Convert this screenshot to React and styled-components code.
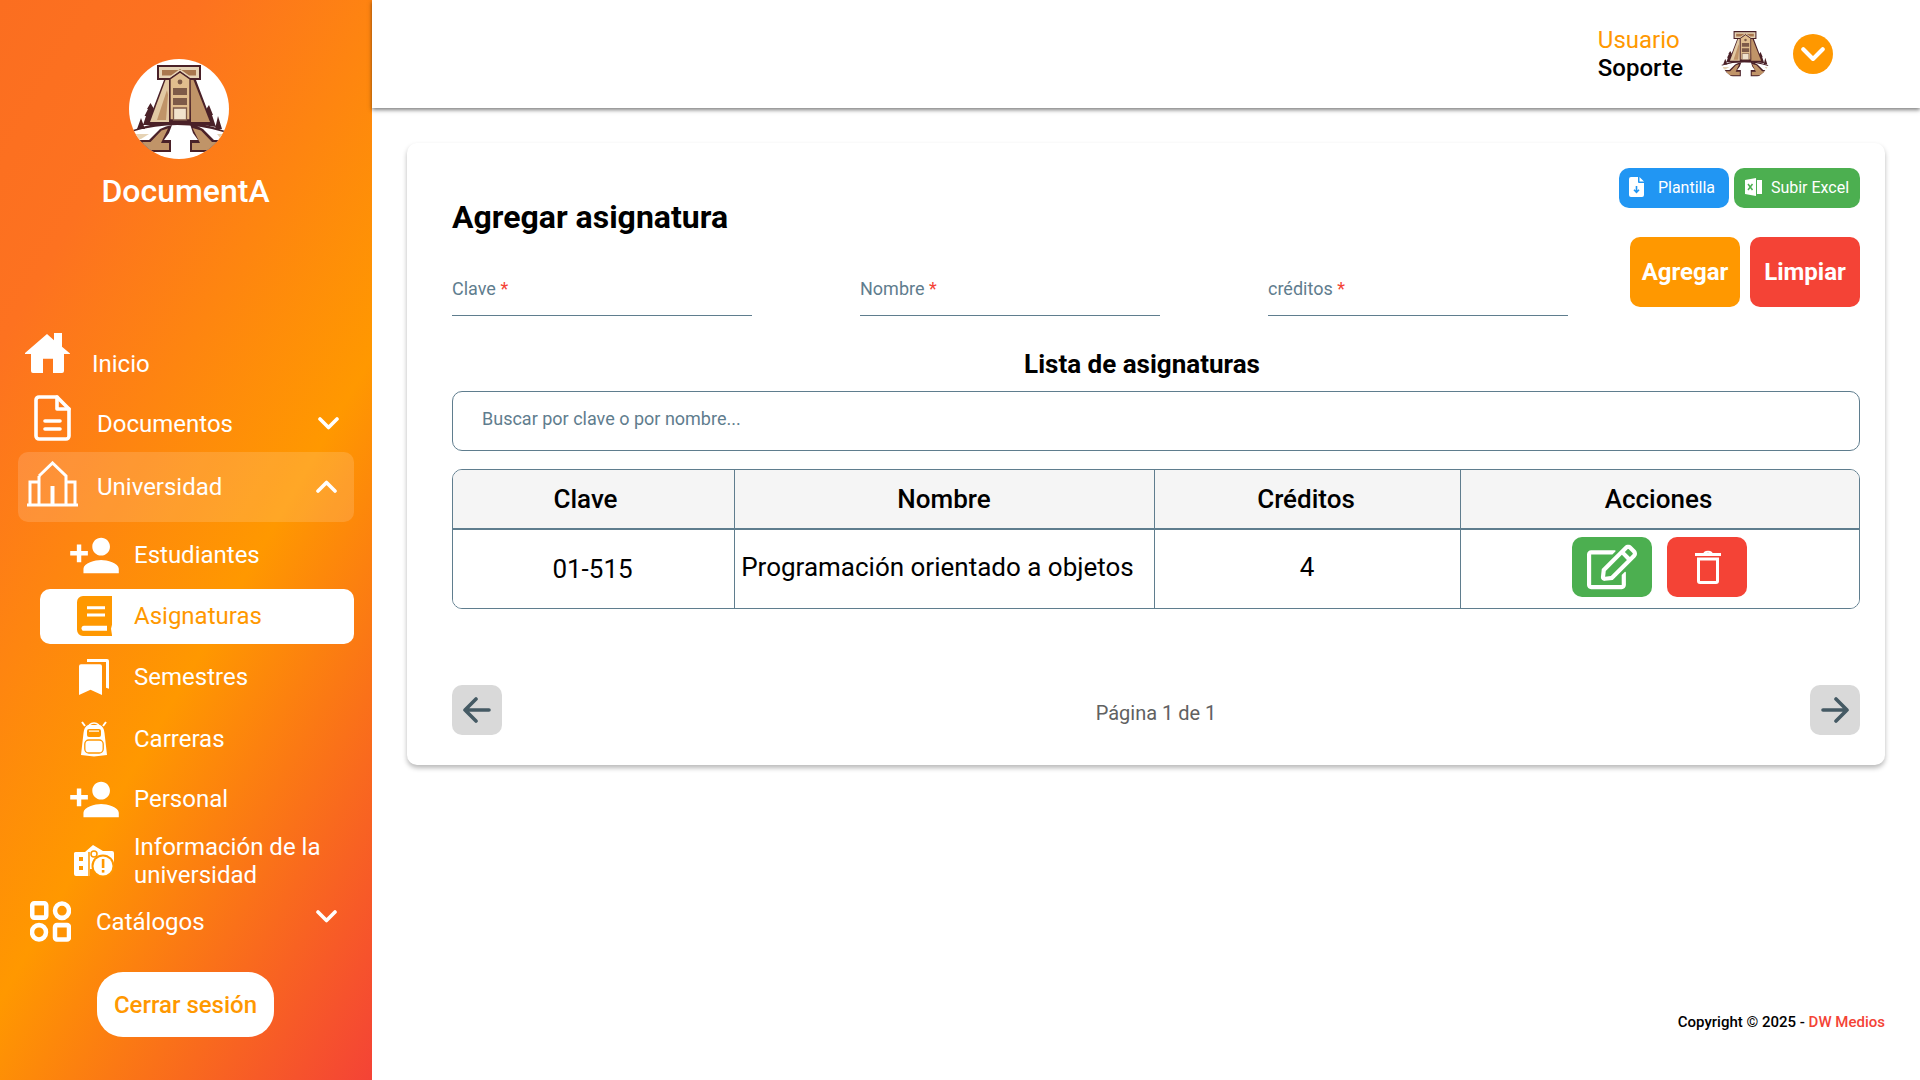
import React from "react";
import styled, { createGlobalStyle } from "styled-components";
import { MdPersonAdd } from "react-icons/md";
import { FaRegEdit } from "react-icons/fa";

const ORANGE = "#ff9800";
const RED = "#f44336";
const SLATE = "#5f7d8e";

const GlobalStyle = createGlobalStyle`
  html, body {
    margin: 0;
    height: 100%;
    overflow: hidden;
    background: #ffffff;
    font-family: Roboto, "Liberation Sans", sans-serif;
  }
  * { box-sizing: border-box; }
`;

function Logo({ size, circle }) {
  const clip = circle ? "logoClipA" : "logoClipB";
  return (
    <svg width={size} height={size} viewBox="0 0 100 100">
      <defs>
        <clipPath id={clip}>
          <circle cx="50" cy="50" r="50" />
        </clipPath>
      </defs>
      {circle && <circle cx="50" cy="50" r="50" fill="#fff" />}
      <g clipPath={`url(#${clip})`}>
        <path d="M14 66 L17 57 L15.500 57 L19 50 L18 50 L21.500 44 L25 50 L24 50 L28 66 Z M74 66 L77 52 L76 52 L80 46 L84 56 L83 56 L87 68 Z M8 70 L12 59 L16 70 Z M86 70 L89 57 L93 70 Z" fill="#4a2128" />
        <path d="M28 6 H72 V21 H67 L84 66 H18 L35 21 H28 Z" fill="#4a2128" />
        <path d="M30 8 H70 V19 H61 L51 12 L41 19 H30 Z" fill="#e6d3b5" />
        <path d="M33 11 H67 V16.500 H60 L51 10 L42 16.500 H33 Z" fill="#a9774e" />
        <path d="M36.500 21 L21 63 H40 L40 21 Z" fill="#e2c9a3" />
        <path d="M38 31 L28 61 H37 L39 36 Z" fill="#c09468" />
        <path d="M64.500 21 L81 63 H62 L61 21 Z" fill="#c09468" />
        <path d="M41 20 L51 13 L61 20 V61 H41 Z" fill="#e0bd8e" stroke="#4a2128" strokeWidth="1.300" />
        <path d="M44 29 H58 V36 H44 Z M44 39 H58 V46 H44 Z" fill="#7d5a48" />
        <path d="M44.500 49 H57.500 V61 H44.500 Z" fill="#f0e2cc" stroke="#7d5a48" strokeWidth="1.300" />
        <circle cx="51" cy="23" r="2.400" fill="#7d5a48" />
        <path d="M4 71 Q50 54 96 72 L96 73.500 Q50 59 4 72.500 Z" fill="#4a2128" />
        <path d="M7 75 H20 L12 80 H7 Z M96 75 H88 L92 80 H96 Z" fill="#e6d3b5" />
        <path d="M9 81 H20 L31 70 Q37 67 43 66 L40 74 L35 81 H42 V93 H18 Q12 88 9 81 Z" fill="#4a2128" />
        <path d="M13 83 H21.500 L32.500 71.500 L39 69.500 L32 84 H40 V91 H20 Q16 88 13 83 Z" fill="#c09468" />
        <path d="M94 81 H85 L74 70 Q68 66 61 65 L64 74 L69 81 H61 V93 H84 Q90 88 94 81 Z" fill="#4a2128" />
        <path d="M90 83 H83 L72 71.500 L63.500 69 L71 84 H63 V91 H82 Q86 88 90 83 Z" fill="#c09468" />
      </g>
    </svg>
  );
}

const HomeIcon = () => (
  <svg width="45" height="40" viewBox="0 0 45 39" preserveAspectRatio="none" fill="#fff">
    <path d="M0 19.500 L22 1 L29 7 V0 H37 V13.500 L45 20 V20.500 H39 V37 a2 2 0 0 1 -2 2 H28 V25 H18 V39 H8 a2 2 0 0 1 -2 -2 V20.500 H0 Z" />
  </svg>
);

const DocIcon = () => (
  <svg width="37" height="46" viewBox="0 0 37 46" fill="none" stroke="#fff" strokeWidth="3.600" strokeLinejoin="round" strokeLinecap="round">
    <path d="M5 2 H23 L35 14 V41 a3 3 0 0 1 -3 3 H5 a3 3 0 0 1 -3 -3 V5 a3 3 0 0 1 3 -3 Z" />
    <path d="M23 2 V14 H35" />
    <path d="M11 26 H26 M11 34 H26" />
  </svg>
);

const CampusIcon = () => (
  <svg width="51" height="46" viewBox="0 0 51 46" fill="none" stroke="#fff" strokeWidth="3">
    <path d="M0 44 H51" />
    <path d="M12 15 L25.500 2 L39 15 V44" />
    <path d="M12 15 V44" />
    <path d="M3 44 V21 H12 M39 21 H48 V44" />
    <path d="M25.500 25 V44" strokeWidth="4" />
  </svg>
);

const BookIcon = () => (
  <svg width="35" height="40" viewBox="0 0 35 39" preserveAspectRatio="none" fill={ORANGE}>
    <path d="M6 0 H35 V28 L34 32 L35 38 V39 H6 a6 6 0 0 1 -6 -6 V6 a6 6 0 0 1 6 -6 Z" />
    <path d="M10 10 H28 V13 H10 Z M10 17 H28 V20 H10 Z" fill="#fff" />
    <path d="M7 29 H30 V34 H7 a2.500 2.500 0 0 1 0 -5 Z" fill="#fff" />
  </svg>
);

const BookmarksIcon = () => (
  <svg width="30" height="36" viewBox="0 0 30 35" preserveAspectRatio="none" fill="#fff">
    <path d="M0 7 a2 2 0 0 1 2 -2 H21 a2 2 0 0 1 2 2 V35 L11.500 30 L0 35 Z" />
    <path d="M8 0 H28 a2 2 0 0 1 2 2 V29 L27 28 V3 H8 Z" />
  </svg>
);

const BackpackIcon = () => (
  <svg width="26" height="36" viewBox="0 0 26 36">
    <path d="M1 1 L4 5 M25 1 L22 5" stroke="#fff" strokeWidth="2" />
    <path d="M8 4 Q13 0 18 4" stroke="#fff" strokeWidth="1.500" fill="none" />
    <path d="M7 4 H19 Q23 6 23.500 12 L26 34 L13 35.500 L0 34 L2.500 12 Q3 6 7 4 Z" fill="#fff" />
    <rect x="6" y="8" width="14" height="8" rx="2" fill={ORANGE} />
    <rect x="8" y="9.500" width="10" height="1.200" fill="#fff" />
    <rect x="3.800" y="19" width="18.400" height="13" rx="4" fill="none" stroke={ORANGE} strokeWidth="1.300" />
  </svg>
);

const InfoIcon = () => (
  <svg width="40" height="32" viewBox="0 0 40 32" fill="#fff">
    <path d="M0 8 a2 2 0 0 1 2 -1 H11 L19 0 L29 6 H38 a2 2 0 0 1 2 2 V24 H0 Z M0 24 H16 V31 H2 a2 2 0 0 1 -2 -2 Z" />
    <path d="M15 7 V32" stroke={ORANGE} strokeWidth="1.500" />
    <rect x="5" y="12" width="4" height="4" fill={ORANGE} />
    <rect x="5" y="21" width="4" height="4" fill={ORANGE} />
    <circle cx="20" cy="9" r="3" fill="none" stroke={ORANGE} strokeWidth="1.500" />
    <circle cx="29" cy="21" r="11.500" fill={ORANGE} />
    <circle cx="29" cy="21" r="9.500" fill="#fff" />
    <rect x="27.800" y="14" width="2.600" height="9" fill={ORANGE} />
    <rect x="27.800" y="25" width="2.600" height="2.600" fill={ORANGE} />
  </svg>
);

const CatalogIcon = () => (
  <svg width="41" height="41" viewBox="0 0 41 40" preserveAspectRatio="none" fill="none" stroke="#fff" strokeWidth="4.500">
    <rect x="2.250" y="2.250" width="14" height="14" rx="2" />
    <circle cx="32" cy="9.500" r="7" />
    <circle cx="9" cy="30.500" r="7" />
    <rect x="25" y="23.500" width="14" height="14" rx="2" />
  </svg>
);

const Chevron = ({ up, size = 21, color = "#fff" }) => (
  <svg width={size} height={size * 0.62} viewBox="0 0 21 13" fill="none" stroke={color} strokeWidth="3.600" strokeLinecap="round" strokeLinejoin="round">
    <path d={up ? "M2 11 L10.500 2.500 L19 11" : "M2 2 L10.500 10.500 L19 2"} />
  </svg>
);

const FileDownIcon = () => (
  <svg width="15" height="20" viewBox="0 0 15 20">
    <path d="M2 0 H9 V5 a1 1 0 0 0 1 1 H15 V18 a2 2 0 0 1 -2 2 H2 a2 2 0 0 1 -2 -2 V2 a2 2 0 0 1 2 -2 Z M10.500 0 L15 4.500 H10.500 Z" fill="#fff" />
    <path d="M7.500 9 V15 M5 12.800 L7.500 15.300 L10 12.800" stroke="#2196f3" strokeWidth="1.600" fill="none" />
  </svg>
);

const ExcelIcon = () => (
  <svg width="17" height="18" viewBox="0 0 17 18">
    <path d="M0 2 L11 0 V18 L0 16 Z" fill="#fff" />
    <path d="M12 2 H17 V16 H12 Z" fill="#fff" />
    <path d="M3 6 L7.500 12 M7.500 6 L3 12" stroke="#4caf50" strokeWidth="1.500" />
  </svg>
);

const TrashIcon = () => (
  <svg width="26" height="34" viewBox="0 0 26 34" fill="none" stroke="#fff" strokeWidth="3">
    <path d="M0 4.500 H26" />
    <path d="M9 3 Q13 0.500 17 3" strokeWidth="2" />
    <path d="M3.500 9 H22.500 V31 a1.500 1.500 0 0 1 -1.500 1.500 H5 a1.500 1.500 0 0 1 -1.500 -1.500 Z" />
  </svg>
);

const ArrowIcon = ({ left }) => (
  <svg width="28" height="28" viewBox="0 0 28 28" fill="none" stroke="#455a64" strokeWidth="3.600" strokeLinecap="round" strokeLinejoin="round">
    <path d={left ? "M26 14 H2 M13 3 L2 14 L13 25" : "M2 14 H26 M15 3 L26 14 L15 25"} />
  </svg>
);

const Sidebar = styled.aside`
  width: 372px;
  height: 1080px;
  flex-shrink: 0;
  padding-top: 59px;
  color: #fff;
  background: linear-gradient(120deg, #fb6e20 0%, #fd7220 20%, #ff9800 58%, #f44336 100%);
`;

const Brand = styled.div`
  display: flex;
  flex-direction: column;
  align-items: center;
  height: 274px;
  padding-right: 1px;
`;

const LogoWrap = styled.div`
  display: flex;
  margin-right: 13px;
  line-height: 0;
`;

const BrandName = styled.div`
  margin-top: 12px;
  font-size: 32px;
  line-height: 40px;
  font-weight: 500;
`;

const Nav = styled.nav`
  display: flex;
  flex-direction: column;
`;

const MainItem = styled.div`
  display: flex;
  align-items: ${(p) => p.$align || "flex-end"};
  height: ${(p) => p.$height}px;
  margin: ${(p) => p.$margin || "0"};
  padding: 0 ${(p) => p.$right || 33}px 0 ${(p) => p.$left}px;
  border-radius: 10px;
  background: ${(p) => (p.$open ? "rgba(255, 255, 255, 0.15)" : "transparent")};
`;

const MainSlot = styled.span`
  display: flex;
  flex-shrink: 0;
  align-self: flex-start;
  margin-top: ${(p) => p.$top || 0}px;
  width: ${(p) => p.$width}px;
`;

const Label = styled.span`
  font-size: 24px;
  line-height: 28px;
`;

const ChevronSlot = styled.span`
  display: flex;
  margin-left: auto;
  align-self: ${(p) => (p.$top ? "flex-start" : "center")};
  margin-top: ${(p) => p.$top || 0}px;
`;

const SubItem = styled.div`
  display: flex;
  align-items: center;
  gap: 16px;
  height: ${(p) => p.$height}px;
  margin: ${(p) => p.$top}px 18px 0 40px;
  padding-left: 30px;
  padding-bottom: ${(p) => (p.$active ? 1 : 0)}px;
  border-radius: 10px;
  background: ${(p) => (p.$active ? "#fff" : "transparent")};
  color: ${(p) => (p.$active ? ORANGE : "#fff")};
`;

const SubSlot = styled.span`
  display: flex;
  justify-content: center;
  width: 48px;
  flex-shrink: 0;
`;

const PersonIcon = styled(MdPersonAdd)`
  flex-shrink: 0;
  font-size: 53px;
`;

const LogoutRow = styled.div`
  display: flex;
  justify-content: center;
  margin-top: 30px;
  padding-right: 1px;
`;

const LogoutButton = styled.button`
  width: 177px;
  height: 65px;
  border: none;
  border-radius: 26px;
  background: #fff;
  color: ${ORANGE};
  font-family: inherit;
  font-size: 24px;
  font-weight: 500;
`;

const Page = styled.div`
  display: flex;
  width: 1920px;
  height: 1080px;
`;

const Main = styled.main`
  flex: 1;
  display: flex;
  flex-direction: column;
  min-width: 0;
`;

const Header = styled.header`
  display: flex;
  align-items: center;
  justify-content: flex-end;
  height: 108px;
  padding-right: 87px;
  box-shadow: 0 2px 4px rgba(0, 0, 0, 0.5);
`;

const UserText = styled.div`
  display: flex;
  flex-direction: column;
  margin-right: 36px;
  font-size: 24px;
  line-height: 28px;
`;

const UserRole = styled.span`
  color: ${ORANGE};
`;

const UserName = styled.span`
  color: #000;
  font-weight: 500;
`;

const UserToggle = styled.div`
  display: flex;
  align-items: center;
  justify-content: center;
  width: 40px;
  height: 40px;
  margin-left: 22px;
  border-radius: 50%;
  background: ${ORANGE};
`;

const Card = styled.section`
  margin: 35px 35px 0;
  height: 622px;
  padding: 25px 25px 0 45px;
  border-radius: 10px;
  background: #fff;
  box-shadow: 0 3px 5px rgba(0, 0, 0, 0.28);
`;

const TopGrid = styled.div`
  display: flex;
  justify-content: space-between;
`;

const FormSide = styled.div`
  width: 1116px;
  padding-top: 30px;
`;

const Title = styled.h1`
  margin: 0;
  font-size: 32px;
  line-height: 38px;
  font-weight: 700;
  color: #000;
`;

const Fields = styled.div`
  display: flex;
  gap: 108px;
  margin-top: 43px;
`;

const Field = styled.label`
  display: block;
  width: 300px;
  height: 37px;
  border-bottom: 1px solid ${SLATE};
  font-size: 18px;
  line-height: 20px;
  color: ${SLATE};
`;

const Star = styled.span`
  color: ${RED};
`;

const ActionSide = styled.div`
  display: flex;
  flex-direction: column;
  align-items: flex-end;
`;

const SmallButtons = styled.div`
  display: flex;
  gap: 5px;
`;

const SmallButton = styled.button`
  display: flex;
  align-items: center;
  justify-content: center;
  gap: ${(p) => p.$gap}px;
  width: ${(p) => p.$width}px;
  height: 40px;
  padding: 0 ${(p) => p.$right || 0}px 2px 0;
  border: none;
  border-radius: 10px;
  background: ${(p) => p.$bg};
  color: #fff;
  font-family: inherit;
  font-size: 16px;
`;

const BigButtons = styled.div`
  display: flex;
  gap: 10px;
  margin-top: 29px;
`;

const BigButton = styled.button`
  width: 110px;
  height: 70px;
  border: none;
  border-radius: 10px;
  background: ${(p) => p.$bg};
  color: #fff;
  font-family: inherit;
  font-size: 24px;
  font-weight: 700;
`;

const ListTitle = styled.h2`
  margin: 31px 0 0;
  padding-right: 28px;
  text-align: center;
  font-size: 26px;
  line-height: 34px;
  font-weight: 700;
  color: #000;
`;

const Search = styled.div`
  display: flex;
  align-items: center;
  height: 60px;
  margin-top: 10px;
  padding: 0 29px 6px;
  border: 1px solid ${SLATE};
  border-radius: 10px;
  font-size: 18px;
  color: ${SLATE};
`;

const TableBox = styled.div`
  margin-top: 18px;
  height: 140px;
  border: 1px solid ${SLATE};
  border-radius: 10px;
  overflow: hidden;
`;

const GridRow = styled.div`
  display: grid;
  grid-template-columns: 282px 420px 306px 1fr;
  height: ${(p) => p.$height}px;
  background: ${(p) => p.$bg || "#fff"};
  border-bottom: ${(p) => p.$line || "none"};
`;

const HeadCell = styled.div`
  display: flex;
  align-items: center;
  justify-content: center;
  padding-right: ${(p) => p.$pad || 0}px;
  border-right: ${(p) => (p.$last ? "none" : `1px solid ${SLATE}`)};
  font-size: 26px;
  font-weight: 500;
  color: #000;
`;

const BodyCell = styled.div`
  display: flex;
  align-items: center;
  justify-content: center;
  gap: 15px;
  padding-right: ${(p) => p.$shift || 0}px;
  padding-bottom: ${(p) => p.$drop || 0}px;
  border-right: ${(p) => (p.$last ? "none" : `1px solid ${SLATE}`)};
  font-size: 26px;
  color: #000;
  white-space: nowrap;
`;

const RowButton = styled.button`
  display: flex;
  align-items: center;
  justify-content: center;
  width: 80px;
  height: 60px;
  padding: 0 0 0 ${(p) => p.$nudge || 0}px;
  border: none;
  border-radius: 10px;
  background: ${(p) => p.$bg};
  color: #fff;
`;

const Pager = styled.div`
  display: flex;
  align-items: center;
  justify-content: space-between;
  margin-top: 76px;
`;

const PageButton = styled.button`
  display: flex;
  align-items: center;
  justify-content: center;
  width: 50px;
  height: 50px;
  padding: 0;
  border: none;
  border-radius: 10px;
  background: #d9d9d9;
`;

const PageText = styled.span`
  padding-top: 6px;
  font-size: 20px;
  color: #616161;
`;

const Footer = styled.footer`
  margin-top: auto;
  padding: 0 35px 48px 0;
  text-align: right;
  font-size: 15px;
  line-height: 20px;
  font-weight: 500;
  color: #000;
`;

const FooterBrand = styled.span`
  color: ${RED};
`;

function App() {
  return (
    <Page>
      <GlobalStyle />
      <Sidebar>
        <Brand>
          <LogoWrap>
            <Logo size={100} circle />
          </LogoWrap>
          <BrandName>DocumentA</BrandName>
        </Brand>
        <Nav>
          <MainItem $height={45} $left={25} $margin="0 0 17px">
            <MainSlot $width={67}><HomeIcon /></MainSlot>
            <Label>Inicio</Label>
          </MainItem>
          <MainItem $height={43} $left={34} $margin="0 0 14px">
            <MainSlot $width={63}><DocIcon /></MainSlot>
            <Label>Documentos</Label>
            <ChevronSlot $top={22}><Chevron /></ChevronSlot>
          </MainItem>
          <MainItem $open $align="center" $height={70} $left={9} $right={17} $margin="0 18px">
            <MainSlot $top={9} $width={70}><CampusIcon /></MainSlot>
            <Label>Universidad</Label>
            <ChevronSlot><Chevron up /></ChevronSlot>
          </MainItem>
          <SubItem $height={50} $top={8}>
            <SubSlot><PersonIcon /></SubSlot>
            <Label>Estudiantes</Label>
          </SubItem>
          <SubItem $active $height={55} $top={9}>
            <SubSlot><BookIcon /></SubSlot>
            <Label>Asignaturas</Label>
          </SubItem>
          <SubItem $height={50} $top={8}>
            <SubSlot><BookmarksIcon /></SubSlot>
            <Label>Semestres</Label>
          </SubItem>
          <SubItem $height={50} $top={12}>
            <SubSlot><BackpackIcon /></SubSlot>
            <Label>Carreras</Label>
          </SubItem>
          <SubItem $height={50} $top={10}>
            <SubSlot><PersonIcon /></SubSlot>
            <Label>Personal</Label>
          </SubItem>
          <SubItem $height={56} $top={9}>
            <SubSlot><InfoIcon /></SubSlot>
            <Label>Información de la<br />universidad</Label>
          </SubItem>
          <MainItem $align="center" $height={41} $left={30} $right={35} $margin="12px 0 0">
            <MainSlot $width={66}><CatalogIcon /></MainSlot>
            <Label>Catálogos</Label>
            <ChevronSlot $top={9}><Chevron /></ChevronSlot>
          </MainItem>
        </Nav>
        <LogoutRow>
          <LogoutButton>Cerrar sesión</LogoutButton>
        </LogoutRow>
      </Sidebar>
      <Main>
        <Header>
          <UserText>
            <UserRole>Usuario</UserRole>
            <UserName>Soporte</UserName>
          </UserText>
          <Logo size={52} />
          <UserToggle><Chevron size={24} /></UserToggle>
        </Header>
        <Card>
          <TopGrid>
            <FormSide>
              <Title>Agregar asignatura</Title>
              <Fields>
                <Field>Clave <Star>*</Star></Field>
                <Field>Nombre <Star>*</Star></Field>
                <Field>créditos <Star>*</Star></Field>
              </Fields>
            </FormSide>
            <ActionSide>
              <SmallButtons>
                <SmallButton $bg="#2196f3" $width={110} $gap={14} $right={4}><FileDownIcon />Plantilla</SmallButton>
                <SmallButton $bg="#4caf50" $width={126} $gap={9}><ExcelIcon />Subir Excel</SmallButton>
              </SmallButtons>
              <BigButtons>
                <BigButton $bg={ORANGE}>Agregar</BigButton>
                <BigButton $bg={RED}>Limpiar</BigButton>
              </BigButtons>
            </ActionSide>
          </TopGrid>
          <ListTitle>Lista de asignaturas</ListTitle>
          <Search>Buscar por clave o por nombre...</Search>
          <TableBox>
            <GridRow $height={60} $bg="#f5f5f5" $line={`2px solid ${SLATE}`}>
              <HeadCell $pad={16}>Clave</HeadCell>
              <HeadCell $pad={1}>Nombre</HeadCell>
              <HeadCell $pad={3}>Créditos</HeadCell>
              <HeadCell $last $pad={3}>Acciones</HeadCell>
            </GridRow>
            <GridRow $height={78}>
              <BodyCell $shift={2}>01-515</BodyCell>
              <BodyCell $shift={14} $drop={4}>Programación orientado a objetos</BodyCell>
              <BodyCell $shift={1} $drop={4}>4</BodyCell>
              <BodyCell $last $shift={2} $drop={4}>
                <RowButton $bg="#4caf50"><FaRegEdit size={50} /></RowButton>
                <RowButton $bg={RED} $nudge={3}><TrashIcon /></RowButton>
              </BodyCell>
            </GridRow>
          </TableBox>
          <Pager>
            <PageButton><ArrowIcon left /></PageButton>
            <PageText>Página 1 de 1</PageText>
            <PageButton><ArrowIcon /></PageButton>
          </Pager>
        </Card>
        <Footer>
          Copyright © 2025 - <FooterBrand>DW Medios</FooterBrand>
        </Footer>
      </Main>
    </Page>
  );
}

export default App;
